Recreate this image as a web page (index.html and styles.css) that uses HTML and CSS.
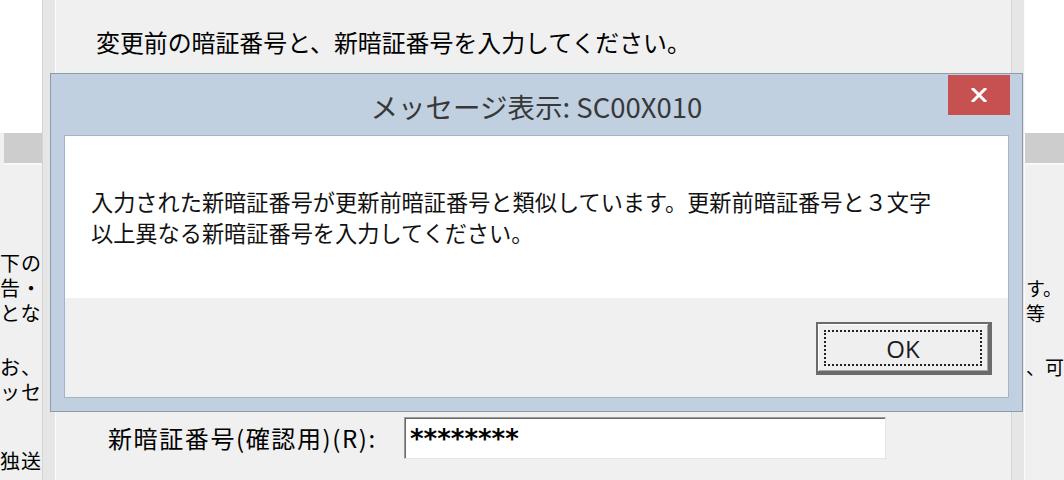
FILE: index.html
```html
<!DOCTYPE html>
<html lang="ja">
<head>
<meta charset="utf-8">
<title>メッセージ表示: SC00X010</title>
<link rel="stylesheet" href="styles.css">
</head>
<body>
<div class="screen">
  <div class="side side-left">
    <div class="side-top"></div>
    <div class="side-band"></div>
    <div class="side-text">
      <p class="t-first">下の</p>
      <p>告・</p>
      <p>とな</p>
      <p class="t-gap">お、</p>
      <p>ッセ</p>
      <p class="t-gap2">独送</p>
    </div>
  </div>
  <div class="strip"></div>
  <main class="panel">
    <p class="intro">変更前の暗証番号と、新暗証番号を入力してください。</p>
    <div class="field-row">
      <label class="field-label">新暗証番号(確認用)(R):</label>
      <div class="field-input">********</div>
    </div>
  </main>
  <div class="strip strip-right"></div>
  <div class="side side-right">
    <div class="side-top"></div>
    <div class="side-band"></div>
    <div class="side-text side-text-right">
      <p>す。</p>
      <p>等</p>
      <p class="r-gap">、可</p>
    </div>
  </div>
</div>

<div class="dialog">
  <div class="titlebar">
    <span></span>
    <div class="title">メッセージ表示: SC00X010</div>
    <button class="close" aria-label="閉じる">
      <svg width="16" height="14" viewBox="0 0 16 14"><path d="M2 1 L14 13 M14 1 L2 13" stroke="#fff" stroke-width="3" stroke-linecap="square"/></svg>
    </button>
  </div>
  <div class="content">
    <div class="msg">入力された新暗証番号が更新前暗証番号と類似しています。更新前暗証番号と３文字<br>以上異なる新暗証番号を入力してください。</div>
    <div class="actions">
      <button class="ok"><span class="focus">OK</span></button>
    </div>
  </div>
</div>
</body>
</html>
```

FILE: styles.css
```css
html, body {
  margin: 0;
  padding: 0;
}
body {
  width: 1064px;
  height: 480px;
  overflow: hidden;
  background: #f0f0f0;
  font-family: "Noto Sans CJK JP", "Noto Sans", sans-serif;
  color: #000;
  position: relative;
}
p { margin: 0; }

.screen {
  display: flex;
  height: 480px;
}

.side {
  display: flex;
  flex-direction: column;
  overflow: hidden;
}
.side-left { width: 42px; }
.side-right { flex: 1; }
.side-top {
  height: 133px;
  background: #ffffff;
}
.side-band {
  height: 30px;
  background: #cdcdcd;
  border-bottom: 2px solid #f8f8f8;
}
.side-left .side-band { margin-left: 4px; }
.side-text {
  flex: 1;
  background: #f0f0f0;
  font-size: 20px;
  line-height: 25px;
  letter-spacing: 1px;
  white-space: nowrap;
  padding-top: 85px;
}
.side-text .t-gap { margin-top: 29px; }
.side-text .t-gap2 { margin-top: 44px; }
.side-text-right {
  font-size: 19px;
  letter-spacing: 0;
  padding-top: 110px;
  padding-left: 1px;
}
.side-text-right .r-gap { margin-top: 29px; }

.strip {
  width: 12px;
  background: #e6e6e6;
  border-left: 1px solid #d4d4d4;
  border-right: 1px solid #fbfbfb;
}

.panel {
  width: 955px;
  display: flex;
  flex-direction: column;
  background: #f0f0f0;
}
.intro {
  font-size: 23.9px;
  line-height: 30px;
  padding: 27px 0 0 40px;
  white-space: nowrap;
}
.field-row {
  margin-top: auto;
  margin-bottom: 21px;
  display: flex;
  align-items: center;
  padding-left: 52px;
}
.field-label {
  width: 296px;
  font-size: 24px;
  letter-spacing: 1.6px;
  line-height: 30px;
  white-space: nowrap;
}
.field-input {
  width: 482px;
  height: 42px;
  box-sizing: border-box;
  background: #fff;
  border: 1px solid;
  border-color: #9a9a9a #e6e6e6 #e6e6e6 #9a9a9a;
  box-shadow: inset 1px 1px 0 #6a6a6a;
  font-family: "DejaVu Sans", sans-serif;
  font-weight: bold;
  font-size: 26px;
  line-height: 30px;
  padding: 6px 0 0 5px;
}

/* dialog window */
.dialog {
  position: absolute;
  left: 50px;
  top: 73px;
  width: 973px;
  height: 339px;
  box-sizing: border-box;
  background: #c0d0e0;
  border: 1px solid #8c9bab;
  padding: 0 13px 13px;
  display: flex;
  flex-direction: column;
}
.titlebar {
  height: 61px;
  display: grid;
  grid-template-columns: 1fr auto 1fr;
}
.title {
  align-self: center;
  font-size: 27.5px;
  line-height: 32px;
  color: #383838;
  white-space: nowrap;
  margin-top: 2px;
}
.close {
  justify-self: end;
  align-self: start;
  width: 62px;
  height: 40px;
  margin: 1px -1px 0 0;
  border: none;
  padding: 0;
  background: #c75050;
  display: flex;
  align-items: center;
  justify-content: center;
}
.content {
  flex: 1;
  display: flex;
  flex-direction: column;
  border: 1px solid #a5b4c4;
}
.msg {
  height: 162px;
  box-sizing: border-box;
  background: #fff;
  padding: 50px 0 0 26px;
  font-size: 22.2px;
  line-height: 31px;
  color: #111;
  white-space: nowrap;
}
.actions {
  flex: 1;
  background: #f0f0f0;
  display: flex;
  justify-content: flex-end;
  align-items: flex-start;
  padding: 24px 16px 0 0;
}
.ok {
  width: 176px;
  height: 53px;
  box-sizing: border-box;
  padding: 6px 6px 5px 6px;
  background: #efefef;
  border-style: solid;
  border-color: #6b6b6b;
  border-width: 2px 4px 4px 2px;
  box-shadow: inset 1px 1px 0 #ffffff, inset -1px -1px 0 #a8a8a8;
  display: flex;
}
.focus {
  flex: 1;
  border: 2px dotted #222;
  display: flex;
  align-items: center;
  justify-content: center;
  font-family: "Open Sans", "Liberation Sans", sans-serif;
  font-size: 24px;
  color: #1c1c1c;
}
```
